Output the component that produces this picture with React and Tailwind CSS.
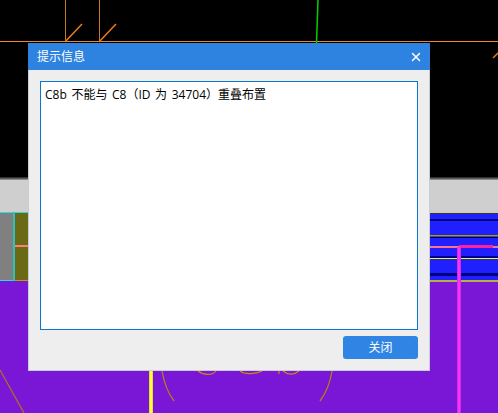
import { X } from "lucide-react"

const font = { fontFamily: '"Open Sans", "Noto Sans CJK SC", sans-serif' }

const Backdrop = () => {
  return (
    <svg className="absolute inset-0" width="498" height="413" viewBox="0 0 498 413" shapeRendering="crispEdges">
      <rect width="498" height="413" fill="#000000" />
      <rect y="177" width="498" height="1" fill="#333333" />
      <rect y="178" width="498" height="1" fill="#5a5a5a" />
      <rect y="179" width="498" height="1" fill="#8a8a8a" />
      <rect y="180" width="498" height="32" fill="#cfcfcf" />
      <rect y="212" width="498" height="201" fill="#7a16d6" />

      {/* left block */}
      <rect y="213" width="13" height="67" fill="#808080" />
      <rect x="15" y="213" width="14" height="67" fill="#6b6a14" />
      <rect y="212" width="30" height="1" fill="#22e0e0" />
      <rect y="280" width="14" height="1" fill="#22e0e0" />
      <rect x="13" y="212" width="2" height="69" fill="#30c0c0" />
      <rect x="15" y="245" width="14" height="2" fill="#ff8070" />
      <rect x="15" y="280" width="14" height="1" fill="#c0a000" />

      {/* right block */}
      <rect x="430" y="213" width="68" height="68" fill="#2020ff" />
      <rect x="430" y="212" width="68" height="1" fill="#f0e000" />
      <rect x="430" y="219" width="68" height="2" fill="#000080" />
      <rect x="430" y="235" width="68" height="1" fill="#a0a030" />
      <rect x="430" y="236" width="68" height="1" fill="#505050" />
      <rect x="430" y="237" width="68" height="1" fill="#000060" />
      <rect x="430" y="246" width="68" height="2" fill="#ff7090" />
      <rect x="430" y="256" width="68" height="2" fill="#000080" />
      <rect x="430" y="258" width="68" height="1" fill="#ffff00" />
      <rect x="430" y="273" width="68" height="3" fill="#000080" />
      <rect x="430" y="280" width="68" height="2" fill="#b8b040" />
      <rect x="459" y="245" width="34" height="3" fill="#ff20a0" />
      <rect x="457" y="247" width="4" height="166" fill="#d030e0" />
      <rect x="458" y="247" width="2" height="166" fill="#ff30ff" />

      <rect x="149" y="371" width="4" height="42" fill="#e8d840" />
      <rect x="150" y="371" width="2" height="42" fill="#ffff30" />

      <g shapeRendering="auto" fill="none">
        <path d="M0 41.500H498" stroke="#f08a20" />
        <path d="M65.500 0V42M99.500 0V42" stroke="#c87a20" />
        <path d="M65 42L82 24M99 42L116 24" stroke="#f07c10" strokeWidth="1.500" />
        <path d="M318 0L316.500 43" stroke="#00d000" strokeWidth="1.500" />
        <path d="M493 58L498 53" stroke="#f07c10" strokeWidth="1.500" />
        <path d="M0 370L24 413" stroke="#b0701c" strokeWidth="1.300" />
        <path d="M162 371C164 382 168 393 174 401" stroke="#b0801c" strokeWidth="1.300" />
        <path d="M198 371C203 375 212 376 216 371" stroke="#c88c10" strokeWidth="1.200" />
        <path d="M240 371C245 375 256 374 262 371" stroke="#c88c10" strokeWidth="1.200" />
        <path d="M279 371V374M283 371C288 375 294 375 299 371" stroke="#c88c10" strokeWidth="1.200" />
        <path d="M332 371C330 383 326 393 320 401" stroke="#b0801c" strokeWidth="1.300" />
      </g>
    </svg>
  )
}

const App = () => {
  return (
    <div className="relative w-[498px] h-[413px] overflow-hidden bg-black" style={font}>
      <Backdrop />

      <div className="absolute left-[28px] top-[43px] w-[402px] h-[328px] flex flex-col bg-[#eeeeee] border-l border-r border-b border-[#c8ccd4] border-t-0">
        <div className="h-[27px] shrink-0 -mx-px flex items-center justify-between pl-[9px] pr-[7px] bg-[#2e82e0] text-white text-[12px]">
          <span>提示信息</span>
          <X size={14} strokeWidth={2.500} />
        </div>

        <div className="flex-1 flex flex-col px-[11px] pt-[11px] pb-[11px]">
          <div className="h-[249px] border border-[#0a78d0] bg-white px-1 pt-[4px] text-[12px] leading-[17px] [word-spacing:1.5px] text-black">
            C8b 不能与 C8（ID 为 34704）重叠布置
          </div>
          <div className="flex justify-end mt-[6px]">
            <button className="w-[75px] h-[23px] rounded-[3px] bg-[#3084e4] text-white text-[12px] flex items-center justify-center">
              关闭
            </button>
          </div>
        </div>
      </div>
    </div>
  )
}

export default App
